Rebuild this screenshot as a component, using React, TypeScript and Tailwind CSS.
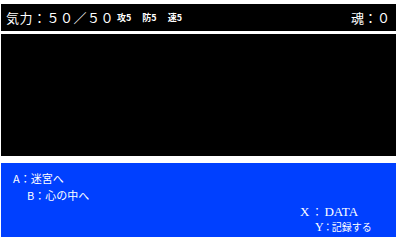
const jp = "font-['Noto_Sans_CJK_JP','Noto_Sans',sans-serif]";

export default function App() {
  return (
    <div className="w-[400px] h-[240px] bg-white pt-[4px] pl-[1px] pr-[4px] pb-[3px] flex flex-col overflow-hidden">
      {/* status bar */}
      <div className={`h-[27px] bg-black text-white flex items-center pl-[5px] pr-[6px] ${jp}`}>
        <span className="text-[13px] tracking-[0.5px] leading-none">気力：５０／５０</span>
        <span className="ml-[3px] flex gap-[11px] text-[9px] font-bold leading-none">
          <span>攻5</span>
          <span>防5</span>
          <span>速5</span>
        </span>
        <span className="ml-auto text-[13px] leading-none">魂：０</span>
      </div>

      {/* main screen */}
      <div className="mt-[3px] h-[122px] bg-black" />

      {/* command panel */}
      <div className={`mt-[7px] flex-1 bg-[#0040ff] text-white pt-[7px] ${jp}`}>
        <div className="pl-[12px] text-[11px] leading-[17px]">A：迷宮へ</div>
        <div className="pl-[26px] text-[11px] leading-[17px]">B：心の中へ</div>
        <div className="pl-[299px] text-[13px] leading-[14px] font-['Liberation_Serif',serif]">
          X<span className={`${jp} text-[11px] px-[2px]`}>：</span>DATA
        </div>
        <div className="pl-[314px] text-[10px] leading-[16px] flex items-center">
          <span className="font-['Liberation_Serif',serif] text-[12px]">Y</span>
          <span className="inline-flex w-[8px] justify-center">：</span>
          <span>記録する</span>
        </div>
      </div>
    </div>
  );
}
